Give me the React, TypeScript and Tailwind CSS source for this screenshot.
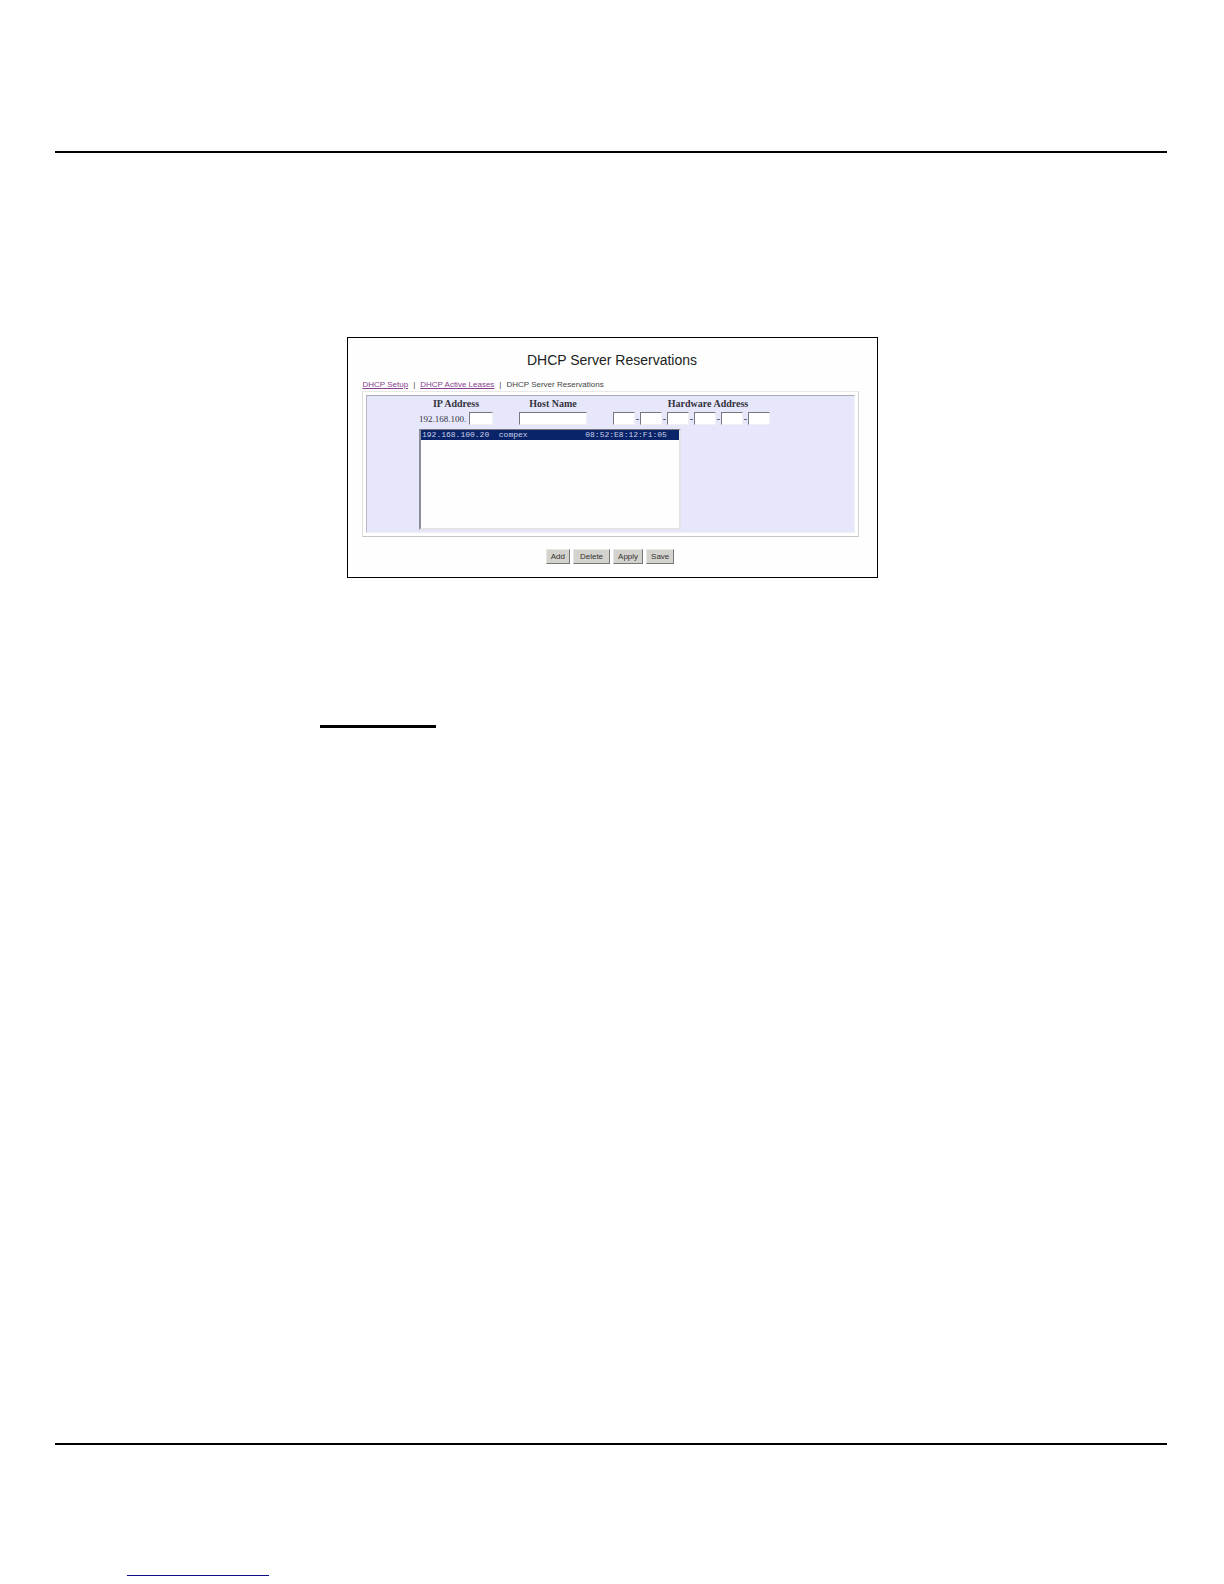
const hardwareFields = [1, 2, 3, 4, 5, 6];

const actions = ['Add', 'Delete', 'Apply', 'Save'];

const reservations = [
  { ip: '192.168.100.20', host: 'compex', hardware: '08:52:E8:12:F1:05' },
];

const fieldClass =
  'h-[13px] border border-t-[#777780] border-l-[#777780] border-r-[#f0f0f4] border-b-[#f0f0f4] bg-white px-px text-[8px] outline-none';

// Pads a value with non-breaking spaces so the list columns line up
function pad(value: string, length: number) {
  return value.padEnd(length, '\u00a0');
}

function Tabs() {
  return (
    <nav className="flex px-px text-[8px] leading-3 text-[#444]">
      <a href="#setup" className="text-[#86408c] underline">DHCP Setup</a>
      <span className="px-[5px]">|</span>
      <a href="#leases" className="text-[#86408c] underline">DHCP Active Leases</a>
      <span className="px-[5px]">|</span>
      <span>DHCP Server Reservations</span>
    </nav>
  );
}

function ReservationFields() {
  return (
    <div className="grid grid-cols-[74px_68px_190px] gap-x-[26px] gap-y-0.5 font-['Liberation_Serif',serif] text-[10px] leading-3 text-[#33333d]">
      <label htmlFor="ip" className="text-center font-bold">IP Address</label>
      <label htmlFor="host" className="text-center font-bold">Host Name</label>
      <label htmlFor="hw-1" className="text-center font-bold">Hardware Address</label>

      <div className="flex items-center justify-between text-[9px]">
        <span>192.168.100.</span>
        <input id="ip" type="text" className={`${fieldClass} w-6`} />
      </div>
      <input id="host" type="text" className={`${fieldClass} w-full`} />
      <div className="flex items-center">
        {hardwareFields.map((n) => (
          <div key={n} className="flex items-center">
            {n > 1 && <span className="w-[5px] text-center">-</span>}
            <input
              id={`hw-${n}`}
              type="text"
              aria-label={`Hardware Address ${n}`}
              className={`${fieldClass} w-[22px]`}
            />
          </div>
        ))}
      </div>
    </div>
  );
}

function ReservationList() {
  return (
    <select
      size={10}
      aria-label="Reservations"
      defaultValue={reservations[0].ip}
      className="mt-1 block h-[101px] w-[262px] appearance-none overflow-hidden border-t border-r-2 border-b-2 border-l-2 border-t-[#777780] border-r-[#e4e4e8] border-b-[#e4e4e8] border-l-[#8c8c9a] bg-[#fefefe] p-0 font-['Liberation_Mono',monospace] text-[8px] outline-none"
    >
      {reservations.map((r) => (
        <option
          key={r.ip}
          value={r.ip}
          className="h-[10px] min-h-0 p-0 pl-px leading-[10px] checked:bg-[#0a246a] checked:bg-[linear-gradient(#0a246a,#0a246a)] checked:text-[#c8cfe6]"
        >
          {pad(r.ip, 16) + pad(r.host, 18) + r.hardware}
        </option>
      ))}
    </select>
  );
}

export default function App() {
  return (
    <main className="min-h-screen bg-white pt-[151px] pr-[57px] pb-2 pl-[55px] font-['Liberation_Sans',Arial,sans-serif]">
      <hr className="border-t-2 border-black" />

      <div className="mx-auto mt-[184px] max-w-[583px]">
        <section className="mr-[25px] ml-[27px] border border-black bg-[#fefefe] px-3.5 pt-3 pb-[13px]">
          <h1 className="text-center text-[14px] leading-5 text-[#222]">DHCP Server Reservations</h1>

          <div className="mt-[9px]">
            <Tabs />
          </div>

          {/* Double bevel around the form */}
          <div className="mr-1 border border-t-[#e8e8e8] border-r-[#d2d2d2] border-b-[#c8c8c8] border-l-[#dedede] p-[3px]">
            <div className="flex justify-center border border-t-[#a8a8b4] border-r-[#f0f0f8] border-b-[#f0f0f8] border-l-[#b8b8c4] bg-[#e7e7fc] pt-0.5 pb-0.5 pl-0.5">
              <div>
                <ReservationFields />
                <ReservationList />
              </div>
            </div>
          </div>

          <div className="mt-3 mr-1 flex justify-center gap-[3px]">
            {actions.map((label) => (
              <button
                key={label}
                type="button"
                className="h-[15px] border border-t-[#e6e6e2] border-r-[#777] border-b-[#777] border-l-[#e6e6e2] bg-[#d4d2cc] px-1 text-[8px] leading-3 text-[#333] nth-2:px-1.5"
              >
                {label}
              </button>
            ))}
          </div>
        </section>

        <hr className="mt-[147px] w-[116px] border-t-3 border-black" />
      </div>

      <hr className="mt-[715px] border-t-2 border-black" />
      <hr className="mt-[130px] ml-[72px] w-[142px] border-t border-[#0c0c86]" />
    </main>
  );
}
